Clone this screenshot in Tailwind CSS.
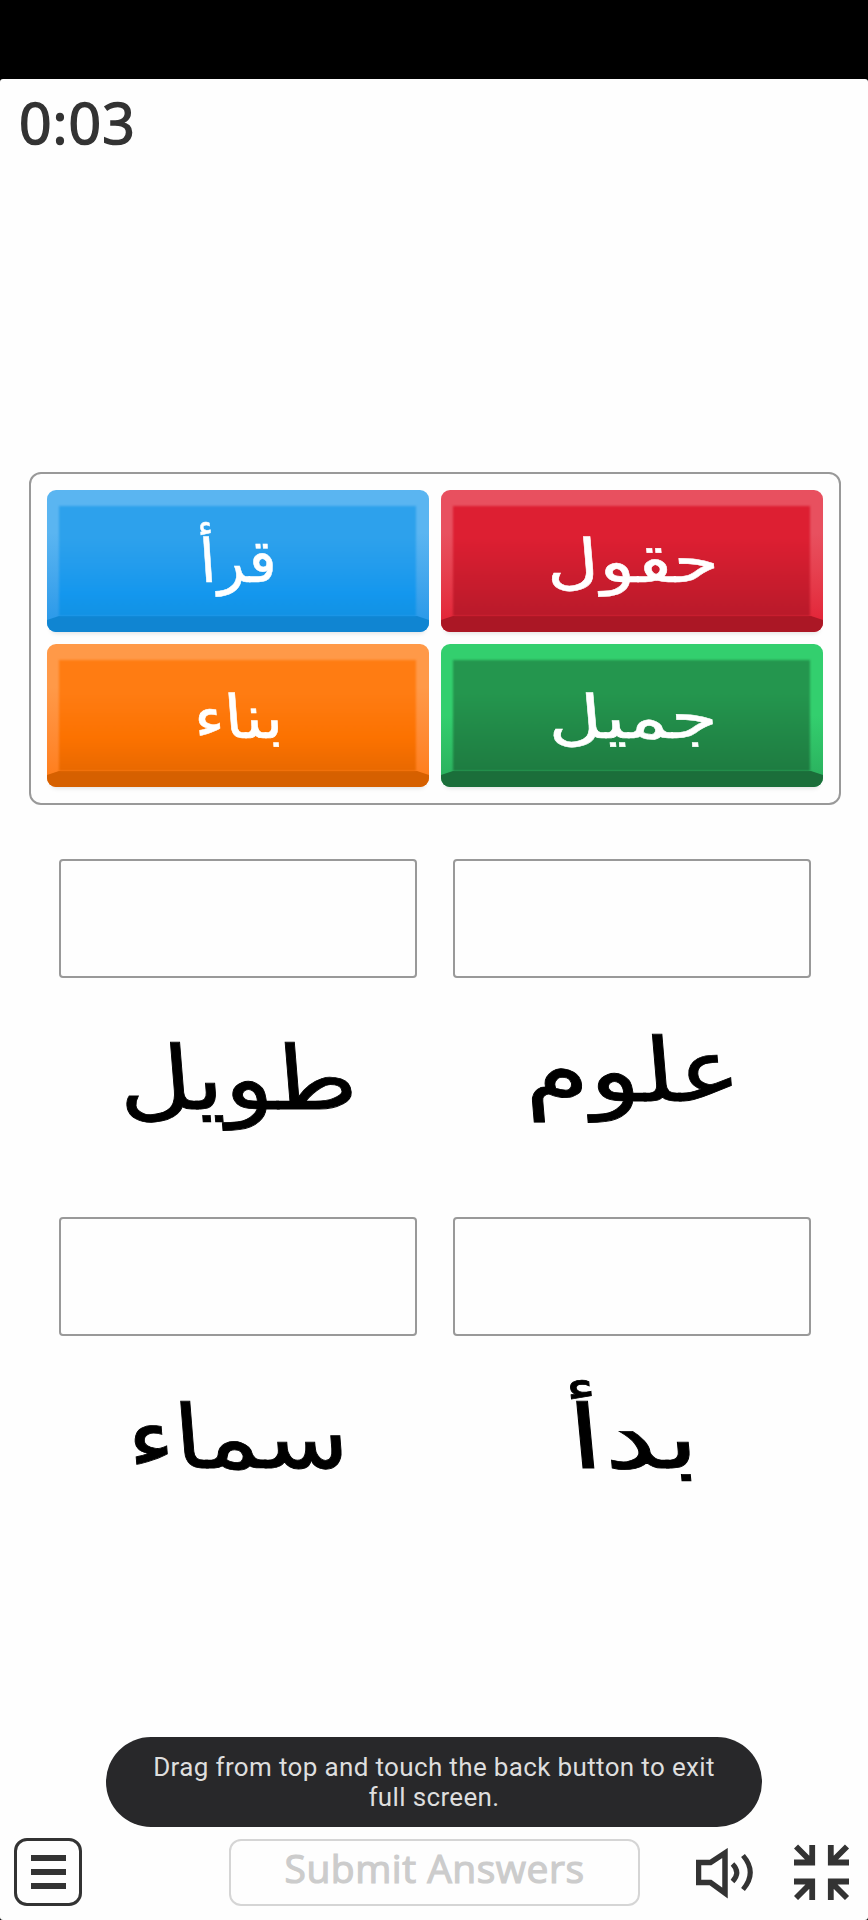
<!DOCTYPE html>
<html lang="en">
<head>
  <meta charset="UTF-8">
  <meta name="viewport" content="width=device-width, initial-scale=1.0">
  <title>Match up</title>
  <script src="https://cdn.jsdelivr.net/npm/@tailwindcss/browser@4"></script>
</head>
<body class="bg-black">
  <div class="relative w-[868px] h-[1920px] pt-[79px] overflow-hidden font-['Open_Sans','Noto_Sans',sans-serif]">
    <div class="h-full flex flex-col bg-[#fefefe] rounded-[3px]">
      <header class="h-[393px] pl-[19px] pt-[15px]">
        <div class="text-[57px] leading-[56px] tracking-[1px] text-[#333] [-webkit-text-stroke:1.6px_#333]">0:03</div>
      </header>

      <main class="h-[1359px]">
        <!-- Answer tiles -->
        <section class="ml-[29px] w-[812px] h-[333px] border-2 border-[#999] rounded-xl pt-4 pl-4 grid grid-cols-[382px_382px] grid-rows-[142px_143px] gap-x-3 gap-y-3 text-white text-[60px] [-webkit-text-stroke:0.5px_#fff] font-['DejaVu_Sans',sans-serif]" lang="ar">
          <button class="relative rounded-[9px] shadow-[0_5px_5px_-4px_#0002] overflow-hidden bg-linear-to-b from-[#5ab5f1] from-30% to-[#2296e8]">
            <span class="absolute inset-x-0 bottom-0 h-4 bg-[#1085d2] [clip-path:polygon(0_4px,12px_0,370px_0,100%_4px,100%_100%,0_100%)]"></span>
            <span class="absolute left-3 right-[13px] top-4 bottom-4 bg-linear-to-b from-[#2da1ec] from-30% via-[#1397ee] via-80% to-[#1292e4] blur-[1px]"></span>
            <span class="relative block skew-x-4 scale-x-[0.98]">قرأ</span>
          </button>
          <button class="relative rounded-[9px] shadow-[0_5px_5px_-4px_#0002] overflow-hidden bg-linear-to-b from-[#e8505f] from-30% to-[#e21c33]">
            <span class="absolute inset-x-0 bottom-0 h-4 bg-[#ab1725] [clip-path:polygon(0_4px,12px_0,370px_0,100%_4px,100%_100%,0_100%)]"></span>
            <span class="absolute left-3 right-[13px] top-4 bottom-4 bg-linear-to-b from-[#dd1f32] from-30% to-[#b91a2a] blur-[1px]"></span>
            <span class="relative block scale-x-[1.22] skew-x-4">حقول</span>
          </button>
          <button class="relative rounded-[9px] shadow-[0_5px_5px_-4px_#0002] overflow-hidden bg-linear-to-b from-[#ff9948] from-30% to-[#ff7b12]">
            <span class="absolute inset-x-0 bottom-0 h-4 bg-[#d66000] [clip-path:polygon(0_4px,12px_0,370px_0,100%_4px,100%_100%,0_100%)]"></span>
            <span class="absolute left-3 right-[13px] top-4 bottom-4 bg-linear-to-b from-[#ff7c12] from-30% via-[#fc7200] via-70% to-[#e96900] blur-[1px]"></span>
            <span class="relative block pt-[2px] scale-x-[1.1] skew-x-4">بناء</span>
          </button>
          <button class="relative rounded-[9px] shadow-[0_5px_5px_-4px_#0002] overflow-hidden bg-linear-to-b from-[#33cf6e] from-50% to-[#2aad5c]">
            <span class="absolute inset-x-0 bottom-0 h-4 bg-[#1b6e3a] [clip-path:polygon(0_4px,12px_0,370px_0,100%_4px,100%_100%,0_100%)]"></span>
            <span class="absolute left-3 right-[13px] top-4 bottom-4 bg-linear-to-b from-[#24964e] from-30% to-[#1e7c41] blur-[1px]"></span>
            <span class="relative block pt-[2px] scale-x-[1.26] skew-x-4">جميل</span>
          </button>
        </section>

        <!-- Drop zones with their words -->
        <section class="mt-[54px] ml-[41px] w-[788px] grid grid-cols-2 grid-rows-[358px_358px] text-black text-[88px] [-webkit-text-stroke:0.8px_#000] font-['DejaVu_Sans',sans-serif]" lang="ar">
          <div class="flex flex-col items-center">
            <div class="w-[358px] h-[119px] border-2 border-[#999] rounded-[4px]"></div>
            <span class="mt-[35px] mr-[2px] scale-x-[1.16] skew-x-4">طويل</span>
          </div>
          <div class="flex flex-col items-center">
            <div class="w-[358px] h-[119px] border-2 border-[#999] rounded-[4px]"></div>
            <span class="mt-[27px] scale-x-[1.2] skew-x-4">علوم</span>
          </div>
          <div class="flex flex-col items-center">
            <div class="w-[358px] h-[119px] border-2 border-[#999] rounded-[4px]"></div>
            <span class="mt-[36px] mr-[2px] scale-x-[1.15] skew-x-4">سماء</span>
          </div>
          <div class="flex flex-col items-center">
            <div class="w-[358px] h-[119px] border-2 border-[#999] rounded-[4px]"></div>
            <span class="mt-[36px] ml-[4px] scale-x-[1.36] skew-x-4">بدأ</span>
          </div>
        </section>
      </main>

      <footer class="h-[89px] pt-[7px] pl-[14px] flex items-start">
        <button class="w-[68px] h-[68px] border-[3px] border-[#333] rounded-[13px] flex flex-col items-center justify-center gap-2">
          <span class="w-[35px] h-[6px] bg-[#333]"></span>
          <span class="w-[35px] h-[6px] bg-[#333]"></span>
          <span class="w-[35px] h-[6px] bg-[#333]"></span>
        </button>
        <button class="ml-[147px] mt-px w-[411px] h-[67px] border-2 border-[#d5d5d5] rounded-xl text-[39px] leading-[54px] tracking-[0.5px] pb-[9px] text-[#ccc] [-webkit-text-stroke:1.2px_#ccc] whitespace-nowrap">Submit Answers</button>
        <svg class="ml-[56px] mt-[10px]" width="58" height="52" viewBox="0 0 58 52" fill="none" stroke="#333" stroke-width="5">
          <path d="M2.5 14.5H14.500L29 5V45L14.500 34.500H2.5Z" stroke-width="5.5"/>
          <path d="M36.500 16Q45 24.500 36.500 33.500"/>
          <path d="M47 7.500Q61.500 24.500 47 41.500"/>
        </svg>
        <svg class="ml-[40px] mt-[6px]" width="56" height="56" viewBox="0 0 56 56" fill="none" stroke="#333" stroke-width="5.800">
          <path d="M2 2.500L17 17.500M18.200 1V18.500H0"/>
          <path d="M53 2.500L38 17.500M36.800 1V18.500H55"/>
          <path d="M2 54L17 39M18.200 56V37.500H0"/>
          <path d="M53 54L38 39M36.800 56V37.500H55"/>
        </svg>
      </footer>
    </div>

    <!-- Fullscreen hint -->
    <div class="absolute left-[106px] top-[1737px] w-[656px] h-[90px] rounded-[45px] bg-[#28282a] text-[#dedede] text-[26px] leading-[30px] tracking-[0.35px] text-center pt-[15px] font-['Roboto',sans-serif]">
      Drag from top and touch the back button to exit<br>full screen.
    </div>
  </div>
</body>
</html>
